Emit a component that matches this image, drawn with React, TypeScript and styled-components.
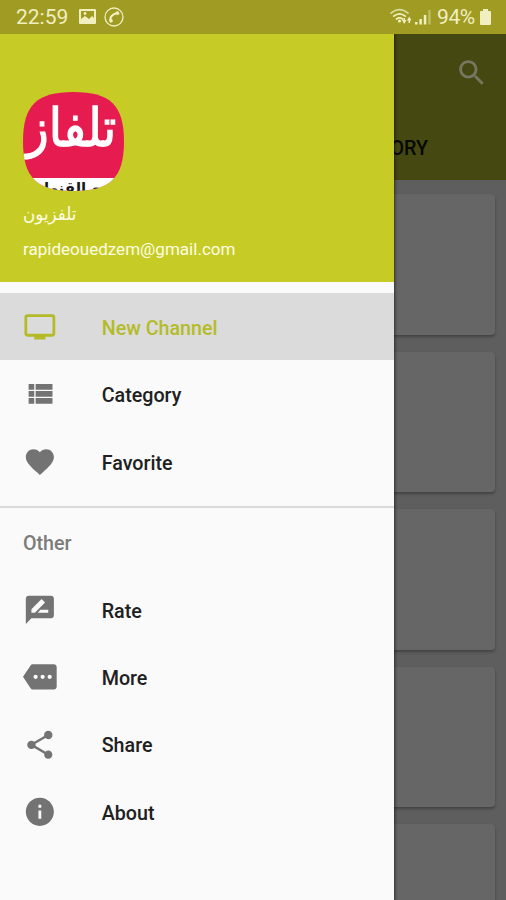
import React from "react";
import styled, { createGlobalStyle } from "styled-components";

const GlobalStyle = createGlobalStyle`
  * { box-sizing: border-box; }
  body { margin: 0; font-family: Roboto, "DejaVu Sans", sans-serif; background: #5d5d5d; }
`;

const Screen = styled.div`
  position: relative;
  display: flex;
  flex-direction: column;
  width: 506px;
  height: 900px;
  overflow: hidden;
`;

const StatusBar = styled.header`
  display: flex;
  align-items: center;
  flex: none;
  height: 34px;
  padding: 0 15px 0 16px;
  background: #9f9b23;
  color: #f1efc0;
`;

const Clock = styled.span`
  width: 63px;
  font-size: 21px;
  line-height: 34px;
  white-space: nowrap;
`;

const Battery = styled.span`
  margin-left: 6px;
  width: 42px;
  font-size: 21px;
  line-height: 34px;
  letter-spacing: -0.4px;
  white-space: nowrap;
`;

const Spacer = styled.div`
  flex: 1;
`;

const Icon = styled.svg<{ $size?: number }>`
  display: block;
  flex: none;
  width: ${(p) => p.$size ?? 33.7}px;
  height: ${(p) => p.$size ?? 33.7}px;
  fill: currentColor;
`;

const Stage = styled.div`
  position: relative;
  flex: 1;
  min-height: 0;
  overflow: hidden;
`;

const Page = styled.main`
  display: flex;
  flex-direction: column;
  height: 100%;
  overflow: hidden;
  background: #5e5e5e;
`;

const AppBar = styled.div`
  display: flex;
  flex-direction: column;
  flex: none;
  height: 146px;
  background: #454811;
`;

const Toolbar = styled.div`
  display: flex;
  justify-content: flex-end;
  align-items: center;
  height: 78px;
  padding-right: 17px;
  color: #777761;
`;

const TabLabel = styled.div`
  display: flex;
  align-items: center;
  justify-content: flex-end;
  height: 68px;
  padding: 4px 78px 0 0;
  color: #070801;
  font-size: 19.7px;
  font-weight: 500;
`;

const CardList = styled.div`
  display: flex;
  flex-direction: column;
  gap: 17px;
  padding: 14px 11px 0 12px;
`;

const Card = styled.div`
  flex: none;
  height: 140.5px;
  border-radius: 4px;
  background: #666;
  box-shadow: 0 2px 3px rgba(0, 0, 0, 0.3);
`;

const Drawer = styled.aside`
  position: absolute;
  top: 0;
  left: 0;
  bottom: 0;
  display: flex;
  flex-direction: column;
  width: 394px;
  background: #fafafa;
  box-shadow: 0 0 3px 1px rgba(0, 0, 0, 0.55);
`;

const Profile = styled.div`
  display: flex;
  flex-direction: column;
  align-items: flex-start;
  flex: none;
  height: 248px;
  padding: 58px 23px 0;
  background: #c6cb26;
  color: #fdfde4;
`;

const ProfileName = styled.div`
  margin-top: 11px;
  height: 24px;
  font-family: "DejaVu Sans", sans-serif;
  font-size: 18px;
  line-height: 24px;
  transform: scaleX(0.93);
  transform-origin: left;
`;

const ProfileMail = styled.div`
  margin-top: 10px;
  font-size: 17.05px;
  line-height: 26px;
`;

const Menu = styled.nav<{ $top: number }>`
  display: flex;
  flex-direction: column;
  padding-top: ${(p) => p.$top}px;
`;

const MenuRow = styled.a<{ $active?: boolean }>`
  display: flex;
  align-items: center;
  gap: 45px;
  height: 67.45px;
  padding-left: 23px;
  background: ${(p) => (p.$active ? "#dbdbdb" : "transparent")};
  color: ${(p) => (p.$active ? "#b4bb28" : "#737373")};
`;

const MenuText = styled.span<{ $active?: boolean }>`
  padding-top: 3px;
  color: ${(p) => (p.$active ? "#b4bb28" : "#202020")};
  font-size: 19.7px;
  font-weight: 500;
`;

const Divider = styled.hr`
  margin: 11px 0 0;
  height: 1.5px;
  border: 0;
  background: #d9d9d9;
`;

const Subheader = styled.div`
  height: 68px;
  padding-left: 23px;
  color: #7b7b7b;
  font-size: 19.7px;
  font-weight: 500;
  line-height: 71px;
`;

const LogoSvg = styled.svg`
  display: block;
  width: 101px;
  height: 99px;
  flex: none;
`;

const LogoText = styled.text`
  font-family: "DejaVu Sans", sans-serif;
`;

const primary = [
  { label: "New Channel", active: true, d: "M21 3H3c-1.1 0-2 .9-2 2v12c0 1.1.9 2 2 2h5v2h8v-2h5c1.1 0 1.99-.9 1.99-2L23 5c0-1.1-.9-2-2-2zm0 14H3V5h18v12z" },
  { label: "Category", d: "M4 14h4v-4H4v4zm0 5h4v-4H4v4zM4 9h4V5H4v4zm5 5h12v-4H9v4zm0 5h12v-4H9v4zM9 5v4h12V5H9z" },
  { label: "Favorite", d: "M12 21.35l-1.45-1.32C5.4 15.36 2 12.28 2 8.5 2 5.42 4.42 3 7.5 3c1.74 0 3.41.81 4.5 2.09C13.09 3.81 14.76 3 16.5 3 19.58 3 22 5.42 22 8.5c0 3.78-3.4 6.86-8.55 11.54L12 21.35z" },
];

const other = [
  { label: "Rate", d: "M20 2H4c-1.1 0-1.99.9-1.99 2L2 22l4-4h14c1.1 0 2-.9 2-2V4c0-1.1-.9-2-2-2zM6 14v-2.47l6.88-6.88c.2-.2.51-.2.71 0l1.77 1.77c.2.2.2.51 0 .71L8.47 14H6zm12 0h-7.5l2-2H18v2z" },
  { label: "More", d: "M22 3H7c-.69 0-1.23.35-1.59.88L0 12l5.41 8.11c.36.53.97.89 1.66.89H22c1.1 0 2-.9 2-2V5c0-1.1-.9-2-2-2zM9 13.5c-.83 0-1.5-.67-1.5-1.5s.67-1.5 1.5-1.5 1.5.67 1.5 1.5-.67 1.5-1.5 1.5zm5 0c-.83 0-1.5-.67-1.5-1.5s.67-1.5 1.5-1.5 1.5.67 1.5 1.5-.67 1.5-1.5 1.5zm5 0c-.83 0-1.5-.67-1.5-1.5s.67-1.5 1.5-1.5 1.5.67 1.5 1.5-.67 1.5-1.5 1.5z" },
  { label: "Share", d: "M18 16.08c-.76 0-1.44.3-1.96.77L8.91 12.7c.05-.23.09-.46.09-.7s-.04-.47-.09-.7l7.05-4.11c.54.5 1.25.81 2.04.81 1.66 0 3-1.34 3-3s-1.34-3-3-3-3 1.34-3 3c0 .24.04.47.09.7L8.04 9.81C7.5 9.31 6.79 9 6 9c-1.66 0-3 1.34-3 3s1.34 3 3 3c.79 0 1.5-.31 2.04-.81l7.12 4.16c-.05.21-.08.43-.08.65 0 1.61 1.31 2.92 2.92 2.92s2.92-1.31 2.92-2.92-1.31-2.92-2.92-2.92z" },
  { label: "About", d: "M12 2C6.48 2 2 6.48 2 12s4.48 10 10 10 10-4.48 10-10S17.52 2 12 2zm1 15h-2v-6h2v6zm0-8h-2V7h2v2z" },
];

type Item = { label: string; d: string; active?: boolean };

const MenuItem = ({ label, d, active }: Item) => (
  <MenuRow $active={active}>
    <Icon viewBox="0 0 24 24"><path d={d} /></Icon>
    <MenuText $active={active}>{label}</MenuText>
  </MenuRow>
);

const Logo = () => (
  <LogoSvg viewBox="0 0 101 99">
    <defs>
      <clipPath id="squircle">
        <path d="M50.500 0C87 0 101 13 101 49.500S87 99 50.500 99 0 86 0 49.500 14 0 50.500 0Z" />
      </clipPath>
    </defs>
    <g clipPath="url(#squircle)">
      <rect width="101" height="99" fill="#e61c50" />
      <rect y="86" width="101" height="13" fill="#fff" />
      <LogoText x="0" y="0" transform="translate(48 54) scale(1.06 1.17)" textAnchor="middle" direction="rtl" fontSize="45" fill="#fff" stroke="#fff" strokeWidth="1.1">تلفاز</LogoText>
      <LogoText x="47" y="101" textAnchor="middle" direction="rtl" fontSize="15" fontWeight="700" fill="#171717">مع القنوات</LogoText>
    </g>
  </LogoSvg>
);

const StatusGlyph = styled.svg<{ $w: number; $gap?: number }>`
  display: block;
  flex: none;
  width: ${(p) => p.$w}px;
  height: 20px;
  margin-left: ${(p) => p.$gap ?? 0}px;
  overflow: visible;
`;

export default function App() {
  return (
    <>
      <GlobalStyle />
      <Screen>
        <StatusBar>
          <Clock>22:59</Clock>
          <StatusGlyph $w={17} viewBox="0 0 17 20">
            <path fill="currentColor" fillRule="evenodd" d="M1 2h15q1 0 1 1v13q0 1-1 1H1q-1 0-1-1V3q0-1 1-1zM2 4v8l4-3 4 3 3-3 2 2V4z" />
            <circle cx="6" cy="6.500" r="1.400" fill="currentColor" />
          </StatusGlyph>
          <StatusGlyph $w={20} $gap={8} viewBox="0 0 20 20">
            <circle cx="10" cy="10" r="9" fill="none" stroke="currentColor" strokeWidth="1.300" />
            <path d="M6.300 14.800Q5 8 13.700 5.700" fill="none" stroke="currentColor" strokeWidth="2" />
            <path d="M11.500 4.800l3-.6 1 3-2.800 1zM5 12.500l3-.7 1 2.700-2.400 1.500z" fill="currentColor" />
          </StatusGlyph>
          <Spacer />
          <StatusGlyph $w={22} viewBox="0 0 22 20">
            <g fill="none" stroke="currentColor" strokeWidth="1.700" strokeLinecap="round">
              <path opacity=".75" d="M1 6.200Q9.500-1 18 6.200" />
              <path d="M3.700 9.200q5.800-4.800 11.600 0M6.500 12q3-2.400 6 0" />
            </g>
            <circle cx="9.500" cy="14" r="1.600" fill="currentColor" />
            <path d="M12 13h1.500v-2H15v2h1.500L14.200 17zM17 13.500l2.200-4 2.300 4H20v2.500h-1.500v-2.500z" fill="currentColor" />
          </StatusGlyph>
          <StatusGlyph $w={16} $gap={3} viewBox="0 0 16 20">
            <path fill="currentColor" d="M0 15h2.500v2.500H0zM4.400 12h2.500v5.500H4.400zM8.800 8h2.500v9.500H8.800z" />
            <path opacity=".4" fill="currentColor" d="M13.200 3h2.500v14.500h-2.500z" />
          </StatusGlyph>
          <Battery>94%</Battery>
          <StatusGlyph $w={11} $gap={1} viewBox="0 0 11 20">
            <path fill="currentColor" d="M3 2h5v2h2q1 0 1 1v12q0 1-1 1H1q-1 0-1-1V5q0-1 1-1h2z" />
          </StatusGlyph>
        </StatusBar>
        <Stage>
          <Page>
            <AppBar>
              <Toolbar>
                <Icon $size={33.7} viewBox="0 0 24 24">
                  <path d="M15.500 14h-.79l-.28-.27C15.410 12.590 16 11.110 16 9.500 16 5.910 13.090 3 9.500 3S3 5.910 3 9.500 5.910 16 9.500 16c1.610 0 3.090-.59 4.230-1.570l.27.28v.79l5 4.990L20.490 19l-4.990-5zm-6 0C7.010 14 5 11.990 5 9.500S7.010 5 9.500 5 14 7.010 14 9.500 11.990 14 9.500 14z" />
                </Icon>
              </Toolbar>
              <TabLabel>CATEGORY</TabLabel>
            </AppBar>
            <CardList>
              {[0, 1, 2, 3, 4].map((n) => <Card key={n} />)}
            </CardList>
          </Page>
          <Drawer>
            <Profile>
              <Logo />
              <ProfileName dir="rtl">تلفزيون</ProfileName>
              <ProfileMail>rapideouedzem@gmail.com</ProfileMail>
            </Profile>
            <Menu $top={11}>
              {primary.map((item) => <MenuItem key={item.label} {...item} />)}
            </Menu>
            <Divider />
            <Subheader>Other</Subheader>
            <Menu $top={0}>
              {other.map((item) => <MenuItem key={item.label} {...item} />)}
            </Menu>
          </Drawer>
        </Stage>
      </Screen>
    </>
  );
}
